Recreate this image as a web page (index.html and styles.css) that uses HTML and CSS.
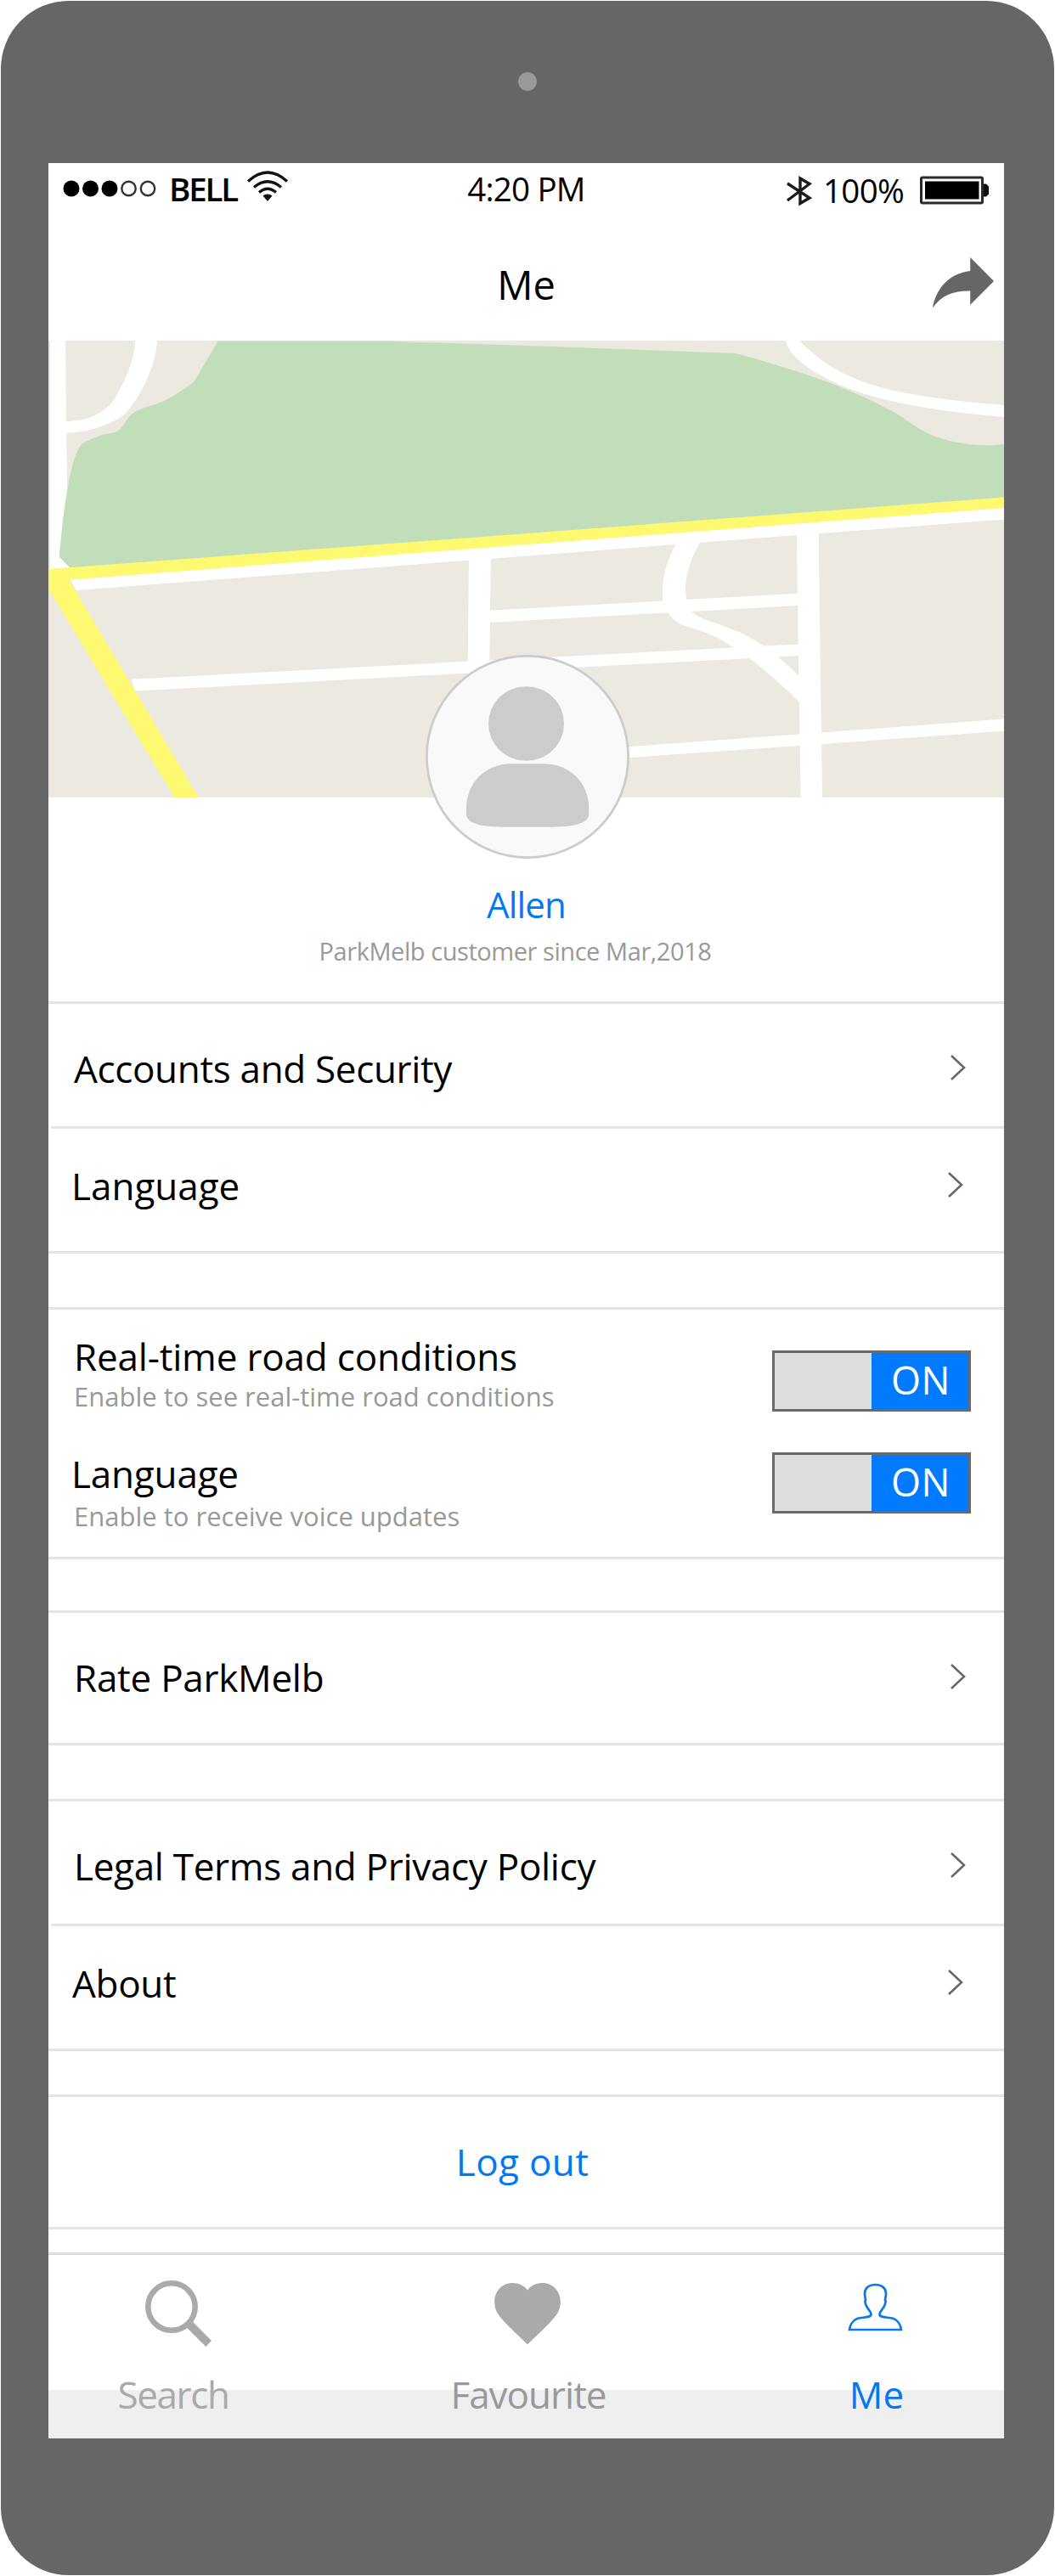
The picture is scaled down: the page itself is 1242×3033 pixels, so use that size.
FILE: index.html
```
<!DOCTYPE html>
<html lang="en">
<head>
<meta charset="utf-8">
<title>ParkMelb – Me</title>
<link rel="stylesheet" href="styles.css">
</head>
<body>
<div class="phone">
  <div class="bezel-top"><span class="camera"></span></div>

  <main class="screen">
    <div class="status">
      <div class="status-left">
        <svg class="signal" width="110" height="22" viewBox="74 211 110 22">
          <g fill="#000"><circle cx="84" cy="222" r="9.5"/><circle cx="106.5" cy="222" r="9.5"/><circle cx="129" cy="222" r="9.5"/></g>
          <g fill="none" stroke="#333" stroke-width="2.4"><circle cx="151.5" cy="222" r="8.2"/><circle cx="174" cy="222" r="8.2"/></g>
        </svg>
        <span class="carrier">BELL</span>
        <svg class="wifi" width="50" height="36" viewBox="290 201 50 36">
          <g fill="none" stroke="#111" stroke-width="3.2">
            <path d="M292 213.500Q315 192.500 338 213.500"/>
            <path d="M299 220.500Q315 207 331 220.500"/>
            <path d="M305 226.500Q315 218 325 226.500"/>
          </g>
          <path d="M309.500 230.500Q315 226.500 320.500 230.500L315 237Z" fill="#111"/>
        </svg>
      </div>
      <span class="time">4:20 PM</span>
      <div class="status-right">
        <svg class="bluetooth" width="32" height="36" viewBox="924 207 32 36">
          <path d="M927 216L953 233L942 239.500V210L953 216.500L927 236" fill="none" stroke="#1a1a1a" stroke-width="3.400"/>
        </svg>
        <span class="percent">100%</span>
        <svg class="battery" width="84" height="34" viewBox="1082 206.500 84 34">
          <rect x="1084.500" y="208.500" width="72" height="30" rx="1.500" fill="none" stroke="#2a2a2a" stroke-width="3"/>
          <rect x="1089" y="213" width="63.500" height="21"/>
          <path d="M1158 216h3l3 3v9l-3 3h-3z" fill="#111"/>
        </svg>
      </div>
    </div>

    <header class="header">
      <h1>Me</h1>
      <svg class="share" width="74" height="62" viewBox="1097 302 74 62">
        <path d="M1170 331L1142.200 303V319C1115 322 1101 343 1098 362.500C1108 348 1122 342 1142.200 342.500V359Z" fill="#666"/>
      </svg>
    </header>

    <svg class="map" width="1125" height="539" viewBox="57 400 1125 539">
      <rect x="57" y="401" width="1125" height="538" fill="#ece9e1"/>
      <g fill="#fff">
        <path d="M59 400H77L79 573L84 675L59 675Z"/>
        <path d="M159.200 400C159 424 148 446 134.700 470C123 487 102 496 78 496V509.700C103 509 124 502 142.600 491C157 481 184 436 185 400Z"/>
        <path d="M924.400 400C929 419 950 434 977.400 447.700C1017 468 1080 482 1182 491V477C1120 472 1062 465 1020 451C990 440 965 426 940.200 400Z"/>
      </g>
      <path d="M256.600 401.800L228 450C216 458 206 466 194 471.800C182 477 170 479 158.400 485C149 491 147 501 139.400 507C133 511 126 510 118.800 512.400C110 516 103 518 96.200 523C83 536 74 605 70 656L86 672L621 634L1182 590V522.700C1153 527 1121 522 1096.200 512C1078 504 1067 493 1048 483C1003 458 941 436 865.800 416L621 407L459.400 401.800Z" fill="#c2ddba"/>
      <g fill="#fff">
        <path d="M81 680L621 639L1182 596V611.500L621 654.400L90 695Z"/>
        <path d="M552 658L578 654L576 790L550.500 793Z"/>
        <path d="M576 718.700L940 698.800V713L576 732.900Z"/>
        <path d="M154.900 799.800L550.500 778.800L940 758.500V772L550.500 792.600L158.800 813.600Z"/>
        <path d="M937.800 628L963.600 626L968 939H942.600Z"/>
        <path d="M797 638C785 659 778 683 780.600 707C784 724 795 735 816 740C845 748 863 762 882.400 775.300C904 792 923 808 943 829V798C916 772 890 750 858.600 739.700C839 731 821 730 813 718C802 699 806 669 825 637Z"/>
        <path d="M735 879.600L941 864.500L1182 846.500V860.700L941 878L735 892.500Z"/>
      </g>
      <path d="M57 670L621 628L1182 585.500V598L621 641L81.200 682.700L233.700 939H205.500L57 693Z" fill="#fdf970"/>
    </svg>

    <section class="profile">
      <svg class="avatar" width="240" height="240" viewBox="501 771 240 240">
        <circle cx="621" cy="891" r="118.600" fill="#f9f9f9" stroke="#ccc" stroke-width="2.800"/>
        <ellipse cx="619.500" cy="852" rx="44.500" ry="43.800" fill="#ccc"/>
        <path d="M602.500 899.300H640C671 899.300 693.300 922 693.300 952V958C693.300 970 675 973.700 645 973.700H597C566 973.700 549 970 549 958V952C549 922 571 899.300 602.500 899.300Z" fill="#ccc"/>
      </svg>
      <h2 class="name">Allen</h2>
      <p class="since">ParkMelb customer since Mar,2018</p>
    </section>

    <section class="group first">
      <div class="row"><span class="t-accounts">Accounts and Security</span><svg class="chev" viewBox="0 0 20 32"><path d="M2 2L17 16L2 30"/></svg></div>
      <div class="row inset second"><span>Language</span><svg class="chev" viewBox="0 0 20 32"><path d="M2 2L17 16L2 30"/></svg></div>
    </section>

    <section class="group switches">
      <div class="texts">
        <p class="title">Real-time road conditions</p>
        <p class="hint">Enable to see real-time road conditions</p>
        <p class="title voice">Language</p>
        <p class="hint voice-hint">Enable to receive voice updates</p>
      </div>
      <div class="toggles">
        <div class="toggle"><span>ON</span></div>
        <div class="toggle"><span>ON</span></div>
      </div>
    </section>

    <section class="group rate">
      <div class="row tall"><span class="t-rate">Rate ParkMelb</span><svg class="chev" viewBox="0 0 20 32"><path d="M2 2L17 16L2 30"/></svg></div>
    </section>

    <section class="group legal">
      <div class="row"><span class="t-legal">Legal Terms and Privacy Policy</span><svg class="chev" viewBox="0 0 20 32"><path d="M2 2L17 16L2 30"/></svg></div>
      <div class="row inset second"><span class="t-about">About</span><svg class="chev" viewBox="0 0 20 32"><path d="M2 2L17 16L2 30"/></svg></div>
    </section>

    <section class="group logout"><span>Log out</span></section>

    <nav class="tabs">
      <div class="tab search">
        <svg width="84" height="88" viewBox="168 2680 84 88">
          <circle cx="202" cy="2716" r="27.700" fill="none" stroke="#aaa" stroke-width="6.500"/>
          <path d="M227 2733.800L249 2756L242.400 2763L219.700 2740.600Z" fill="#aaa"/>
        </svg>
        <span>Search</span>
      </div>
      <div class="tab favourite">
        <svg width="84" height="88" viewBox="579 2680 84 88">
          <path d="M621 2696.500C617 2691 611 2688 603.200 2688C591 2688 582.200 2698 582.200 2710C582.200 2721 587 2726 594 2734C602 2742.500 611 2750.500 621 2760.500C631 2750.500 640 2742.500 648 2734C655 2726 659.800 2721 659.800 2710C659.800 2698 651 2688 638.800 2688C631 2688 625 2691 621 2696.500Z" fill="#aaa"/>
        </svg>
        <span>Favourite</span>
      </div>
      <div class="tab me">
        <svg width="84" height="88" viewBox="988 2680 84 88">
          <path d="M1030.500 2690C1022 2690 1017.600 2695 1018 2701.500L1019 2708C1018 2708.500 1018.500 2712 1019.500 2714C1021 2719 1025.500 2720.500 1025.500 2725C1025 2729.500 1015 2728 1009 2730C1003 2732.500 1000.500 2739 1000 2743H1061C1060.500 2739 1058 2732.500 1052 2730C1046 2728 1036 2729.500 1035.500 2725C1035.500 2720.500 1040 2719 1041.500 2714C1042.500 2712 1043 2708.500 1042 2708L1043 2701.500C1043.400 2695 1039 2690 1030.500 2690Z" fill="none" stroke="#0a78ee" stroke-width="2.700"/>
        </svg>
        <span>Me</span>
      </div>
    </nav>
  </main>
</div>
</body>
</html>
```
FILE: styles.css
```
* { box-sizing: border-box; }

body {
  margin: 0;
  background: #fff;
  font-family: "Open Sans", "Noto Sans", sans-serif;
  font-size: 44px;
  line-height: 60px;
  color: #000;
}

h1, h2, p { margin: 0; font-weight: 400; }
svg { display: block; flex: none; }
span { white-space: nowrap; }

.phone {
  width: 1240px;
  height: 3031px;
  margin: 1px;
  padding: 0 59px 0 56px;
  background: #666;
  border-radius: 80px;
}

.bezel-top {
  height: 191px;
  padding: 84px 0 0 3px;
  display: flex;
  justify-content: center;
}
.camera { width: 22px; height: 22px; border-radius: 50%; background: #999; }

.screen { width: 1125px; height: 2679px; background: #fff; }

/* status bar */
.status { height: 60px; display: grid; grid-template-columns: 1fr auto 1fr; }
.status-left, .status-right { display: flex; align-items: flex-start; }
.status-right { justify-content: flex-end; }
.signal { margin: 19px 0 0 17px; }
.carrier { width: 91px; margin-left: 15px; font-size: 38.5px; font-weight: 600; letter-spacing: -2.2px; }
.wifi { margin: 9px 0 0 0; }
.time { font-size: 38.5px; letter-spacing: -0.8px; }
.bluetooth { margin-top: 15px; }
.percent { width: 100px; margin: 2px 13px 0 13px; font-size: 38.5px; font-weight: 500; letter-spacing: -0.7px; }
.battery { margin: 14.5px 16px 0 0; }

.header {
  height: 148px;
  padding-top: 51px;
  display: grid;
  grid-template-columns: 1fr auto 1fr;
}
.header h1 { grid-column: 2; font-size: 47px; line-height: 64px; }
.share { justify-self: end; margin: -1px 11px 0 0; }

/* profile */
.profile {
  height: 243px;
  border-bottom: 3px solid #e4e4e4;
  display: flex;
  flex-direction: column;
  align-items: center;
}
.avatar { position: relative; margin: -168px 0 0 3px; }
.name { margin-top: 24px; font-size: 42px; letter-spacing: -0.8px; color: #0478f2; }
.since {
  margin-top: 5px;
  padding-right: 26px;
  font-size: 29px;
  line-height: 40px;
  letter-spacing: -0.44px;
  color: #999;
}

/* settings list */
.group { border-top: 3px solid #e4e4e4; border-bottom: 3px solid #e4e4e4; }
.group.first { border-top: 0; }
.row {
  height: 144px;
  padding: 46px 44px 0 30px;
  display: flex;
  justify-content: space-between;
  align-items: flex-start;
}
.row.tall { height: 153px; }
.row.second { padding: 37px 47px 0 27px; }
.row.inset { position: relative; height: 147px; padding-top: 40px; }
.row.inset::before {
  content: "";
  position: absolute;
  inset: 0 0 auto 3px;
  height: 3px;
  background: #e4e4e4;
}
.chev {
  width: 20px;
  height: 32px;
  margin-top: 13px;
  fill: none;
  stroke: #666;
  stroke-width: 2.5;
}
.t-accounts { letter-spacing: -0.33px; }
.t-rate { letter-spacing: -0.26px; }
.t-legal { letter-spacing: -0.3px; }
.t-about { margin-left: 1px; letter-spacing: -0.3px; }

.switches {
  height: 297px;
  margin-top: 63px;
  padding: 28px 39px 0 30px;
  display: flex;
  justify-content: space-between;
}
.title { line-height: 54px; letter-spacing: -0.18px; }
.hint { font-size: 31px; line-height: 40px; color: #999; }
.voice { margin: 44px 0 0 -3px; }
.voice-hint { margin-top: 3px; }
.toggles { padding-top: 20px; display: grid; gap: 48px; align-content: start; }
.toggle {
  width: 234px;
  height: 72px;
  border: 3px solid #6a6a6a;
  background: linear-gradient(90deg, #ddd 50%, #007aff 50%);
  display: flex;
  justify-content: flex-end;
  color: #fff;
}
.toggle span { width: 114px; padding-left: 2px; text-align: center; font-size: 45px; line-height: 64px; letter-spacing: 0.5px; }

.rate { margin-top: 60px; }
.legal { margin-top: 63px; }
.logout {
  height: 159px;
  margin-top: 51px;
  padding: 46px 9px 0 0;
  text-align: center;
  letter-spacing: 0.35px;
  color: #0478f2;
}

/* tab bar */
.tabs {
  height: 219px;
  margin-top: 27px;
  border-top: 3px solid #ddd;
  background: linear-gradient(#fff 159px, #efefef 159px);
  display: grid;
  grid-template-columns: 294px 544px 274px;
}
.tab {
  padding-top: 25px;
  display: flex;
  flex-direction: column;
  align-items: center;
  gap: 21px;
}
.search { color: #aaa; letter-spacing: -1.37px; }
.search svg { margin-left: 12px; }
.favourite { color: #999; letter-spacing: -1px; }
.favourite svg, .me svg { margin-right: 4px; }
.favourite span { margin-right: 2px; }
.me { color: #0478f2; }
```
